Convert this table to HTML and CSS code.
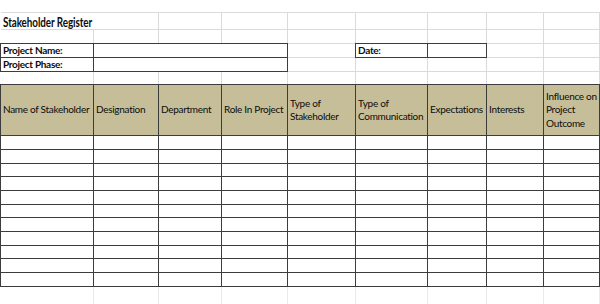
FILE: index.html
```html
<!DOCTYPE html>
<html>
<head>
<meta charset="utf-8">
<link rel="stylesheet" href="styles.css">
</head>
<body>
<div class="sheet">
  <div class="top-row"></div>

  <div class="c title span2"><span class="title-text">Stakeholder Register</span></div>
  <div class="c"></div><div class="c"></div><div class="c"></div><div class="c"></div><div class="c"></div><div class="c"></div><div class="c"></div>

  <div class="c"></div><div class="c"></div><div class="c"></div><div class="c"></div><div class="c"></div><div class="c"></div><div class="c"></div><div class="c"></div><div class="c"></div>

  <div class="c d label">Project Name:</div>
  <div class="c d span3"></div>
  <div class="c"></div>
  <div class="c d label">Date:</div>
  <div class="c d"></div>
  <div class="c"></div><div class="c"></div>

  <div class="c d label">Project Phase:</div>
  <div class="c d span3"></div>
  <div class="c"></div><div class="c"></div><div class="c"></div><div class="c"></div><div class="c"></div>

  <div class="c"></div><div class="c"></div><div class="c"></div><div class="c"></div><div class="c"></div><div class="c"></div><div class="c"></div><div class="c"></div><div class="c"></div>

  <div class="c d head">Name of Stakeholder</div>
  <div class="c d head">Designation</div>
  <div class="c d head">Department</div>
  <div class="c d head">Role In Project</div>
  <div class="c d head">Type of<br>Stakeholder</div>
  <div class="c d head">Type of<br>Communication</div>
  <div class="c d head">Expectations</div>
  <div class="c d head">Interests</div>
  <div class="c d head">Influence on<br>Project<br>Outcome</div>

  <div class="c d"></div><div class="c d"></div><div class="c d"></div><div class="c d"></div><div class="c d"></div><div class="c d"></div><div class="c d"></div><div class="c d"></div><div class="c d"></div>
  <div class="c d"></div><div class="c d"></div><div class="c d"></div><div class="c d"></div><div class="c d"></div><div class="c d"></div><div class="c d"></div><div class="c d"></div><div class="c d"></div>
  <div class="c d"></div><div class="c d"></div><div class="c d"></div><div class="c d"></div><div class="c d"></div><div class="c d"></div><div class="c d"></div><div class="c d"></div><div class="c d"></div>
  <div class="c d"></div><div class="c d"></div><div class="c d"></div><div class="c d"></div><div class="c d"></div><div class="c d"></div><div class="c d"></div><div class="c d"></div><div class="c d"></div>
  <div class="c d"></div><div class="c d"></div><div class="c d"></div><div class="c d"></div><div class="c d"></div><div class="c d"></div><div class="c d"></div><div class="c d"></div><div class="c d"></div>
  <div class="c d"></div><div class="c d"></div><div class="c d"></div><div class="c d"></div><div class="c d"></div><div class="c d"></div><div class="c d"></div><div class="c d"></div><div class="c d"></div>
  <div class="c d"></div><div class="c d"></div><div class="c d"></div><div class="c d"></div><div class="c d"></div><div class="c d"></div><div class="c d"></div><div class="c d"></div><div class="c d"></div>
  <div class="c d"></div><div class="c d"></div><div class="c d"></div><div class="c d"></div><div class="c d"></div><div class="c d"></div><div class="c d"></div><div class="c d"></div><div class="c d"></div>
  <div class="c d"></div><div class="c d"></div><div class="c d"></div><div class="c d"></div><div class="c d"></div><div class="c d"></div><div class="c d"></div><div class="c d"></div><div class="c d"></div>
  <div class="c d"></div><div class="c d"></div><div class="c d"></div><div class="c d"></div><div class="c d"></div><div class="c d"></div><div class="c d"></div><div class="c d"></div><div class="c d"></div>
  <div class="c d"></div><div class="c d"></div><div class="c d"></div><div class="c d"></div><div class="c d"></div><div class="c d"></div><div class="c d"></div><div class="c d"></div><div class="c d"></div>

  <div class="c fade"></div><div class="c fade"></div><div class="c fade"></div><div class="c fade"></div><div class="c fade"></div><div class="c fade"></div><div class="c fade"></div><div class="c fade"></div><div class="c fade"></div>
</div>
</body>
</html>
```

FILE: styles.css
```css
* { box-sizing: border-box; }
html, body { margin: 0; padding: 0; background: #ffffff; }
body {
  width: 600px;
  height: 304px;
  overflow: hidden;
  font-family: Lato, "Open Sans", "Liberation Sans", sans-serif;
  font-size: 10px;
  letter-spacing: -0.3px;
  color: #0c0c0c;
}
.sheet {
  display: grid;
  padding-left: 1px;
  grid-template-columns: 93px 65px 63px 66px 68px 72px 59px 57px 56px;
  grid-template-rows: 13px 17px 14px 14px 14px 13px 51px 14px 14px 13px 14px 14px 13px 14px 14px 13px 14px 14px 18px;
}
.top-row {
  grid-column: 1 / -1;
  border-bottom: 1px solid #dadada;
}
.c {
  border-right: 1px solid #dadada;
  border-bottom: 1px solid #dadada;
  white-space: nowrap;
  min-width: 0;
}
.d {
  border: 1px solid #3c3c3c;
  margin: -1px 0 0 -1px;
}
.span2 { grid-column: span 2; }
.span3 { grid-column: span 3; }
.title {
  font-weight: bold;
  font-size: 13px;
  padding-left: 2px;
  line-height: 18px;
}
.title-text {
  display: inline-block;
  transform: scaleX(0.76);
  transform-origin: left center;
  letter-spacing: -0.1px;
}
.label {
  font-weight: bold;
  padding-left: 2px;
  line-height: 13px;
}
.head {
  background: #c6be99;
  display: flex;
  align-items: center;
  padding-left: 2px;
  line-height: 13.5px;
}
.fade {
  border-bottom: none;
  border-right-color: #ebebeb;
}
```
